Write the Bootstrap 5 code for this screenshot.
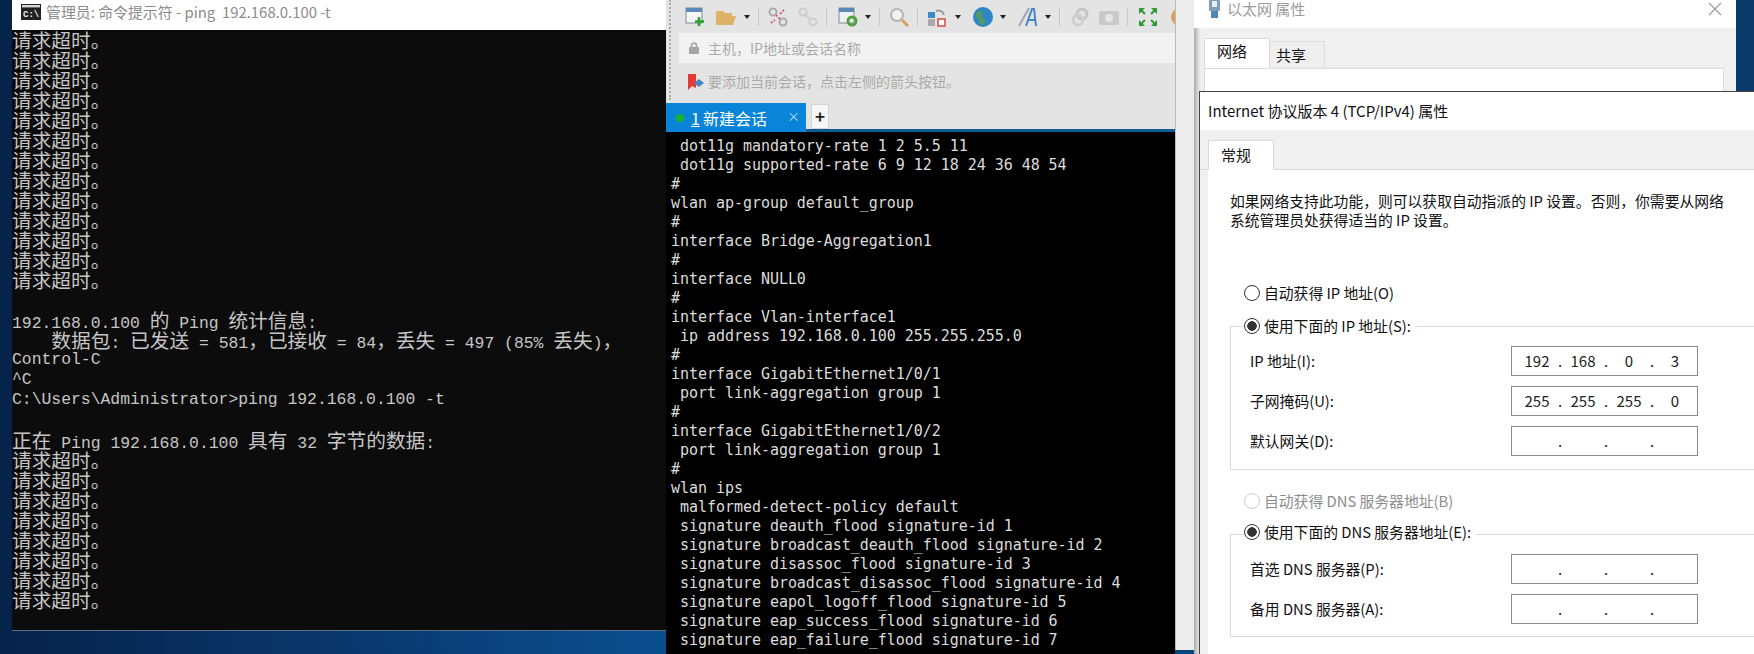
<!DOCTYPE html>
<html lang="zh-CN">
<head>
<meta charset="utf-8">
<title>Screenshot</title>
<link href="https://cdn.jsdelivr.net/npm/bootstrap@5.3.0/dist/css/bootstrap.min.css" rel="stylesheet">
<style>
html,body{height:654px;overflow:hidden}
body{position:relative;width:1754px;font-family:"Noto Sans CJK SC","Liberation Sans",sans-serif;background:linear-gradient(90deg,#06234a 0,#0a3468 300px,#0b4f90 670px,#0a3a68 1730px,#0a3a68 100%)}
.dwin{position:absolute;overflow:hidden}
/* cmd */
.w-cmd{left:12px;top:0;width:654px;height:631px;background:#0c0c0c;border-bottom:1px solid #5d7187}
.cmd-title{height:30px;background:#fff;padding:0 0 6px 9px;gap:5px;color:#8c8c8c;font-size:14.9px;line-height:18px;white-space:pre}
.cmd-body{font-family:"Liberation Mono",monospace;font-size:16.4px;color:#c6c6c6}
.cmd-ln{height:20px;line-height:20px;white-space:pre}
.zh{display:inline-block;height:20px;font-family:"Noto Sans CJK SC",sans-serif;font-size:19.7px;line-height:20px}
/* xshell */
.w-xs{left:666px;top:0;width:509px;height:654px;background:#000}
.xs-chrome{height:103px;background:#e4e4e4;position:relative}
.xs-dots{position:absolute;left:3px;top:0;bottom:3px;border-left:2px dotted #a9a9a9}
.xs-tools{height:33px;padding-left:19px}
.ti{display:block;flex:none}
.caret-d{width:0;height:0;border:3px solid transparent;border-top:4px solid #222;border-bottom:0;flex:none}
.t-sep{width:1px;height:18px;background:#c8c8c8;flex:none}
.xs-addr{height:30px;margin-left:13px;background:#f2f2f2;padding-left:9px;gap:8px;color:#aaa;font-size:14px}
.xs-book{height:37px;padding-left:22px;gap:4px;color:#aaa;font-size:14px}
.xs-tabs{height:29px;background:#e4e4e4;border-bottom:3px solid;border-image:linear-gradient(#a8d4ef 0 66%,#0d5c96 66%) 1}
.tab-on{width:140px;height:29px;margin-bottom:-3px;background:#0a84d8;color:#fff;font-size:16px;padding-left:10px;position:relative}
.tab-dot{width:8px;height:8px;border-radius:50%;background:#16b52d;margin-right:7px}
.tab-num{margin-right:3px}
.tab-x{position:absolute;left:121px;top:3px;font-size:13px;color:#b7d9f2}
.tab-add{width:18px;height:25px;margin:1px 0 0 5px;background:#f7f7f7;border:1px solid #d5d5d5;color:#222;font-size:17px;font-weight:700;line-height:22px;text-align:center}
.term{padding:5px 0 0 5px;font-family:"DejaVu Sans Mono",monospace;font-size:15px;letter-spacing:-.04px;color:#dcdcdc}
.term div{height:19px;line-height:19px;white-space:pre}
/* gutter window behind */
.w-gut{left:1175px;top:0;width:19px;height:650px;background:#ececec;border-left:1px solid #bbb}
/* ethernet */
.w-eth{left:1194px;top:0;width:542px;height:654px;background:#f0f0f0;box-shadow:inset 5px 0 4px -2px #a9a9a9}
.eth-title{height:28px;background:#fff;padding:0 14px 10px 14px;color:#9c9c9c;font-size:15px;line-height:18px;gap:6px}
.eth-tabs{padding:10px 0 0 10px;height:40px}
.wtab{font-size:15px;color:#111;display:flex;align-items:center;justify-content:center}
.wtab-on{background:#fff;width:66px;height:30px;border:1px solid #dcdcdc;border-bottom:0;padding-right:10px}
.wtab-off{background:#eee;width:55px;height:27px;margin-top:3px;border:1px solid #dcdcdc;border-left:0;border-bottom:0;padding-right:12px}
.eth-body{margin:0 12px 0 10px;background:#fff;border:1px solid #dcdcdc;height:200px}
/* ipv4 */
.w-ip{left:1199px;top:91px;width:555px;height:563px;background:#f0f0f0;border-left:1px solid #444;border-top:1px solid #444}
.ip-title{height:38px;background:#fff;padding-left:8px;color:#111;font-size:15px}
.ip-tabs{height:40px;padding:10px 0 0 8px;border-bottom:1px solid #d9d9d9}
.ip-tabs .wtab-on{width:66px;height:30px;margin-bottom:-1px;position:relative}
.ip-body{margin-left:8px;background:#fff;height:500px;padding:21px 0 0 22px;color:#111;font-size:14.8px}
.ip-note{line-height:19px;height:38px;margin-bottom:56px;white-space:nowrap}
.opt{height:16px;line-height:16px;margin-bottom:0;white-space:nowrap;position:relative;z-index:1;background:#fff;width:max-content;padding-right:4px;margin-left:14px}
.opt .form-check-input{width:16px;height:16px;margin:0 4px 0 0;border:1px solid #333;vertical-align:-2px;float:none;border-radius:50%;background-color:#fff}
.opt .form-check-input:checked{background-color:#fff;border-color:#333;background-image:radial-gradient(circle,#333 0 4.5px,#fff 5px)}
.opt .form-check-input:disabled{opacity:1;border-color:#ccc}
.opt-dis{color:#8d8d8d}
.gbox{border:1px solid #dcdcdc;border-right:0;margin-top:-8px;padding:19px 0 0 19px}
.gbox-ip{height:144px;margin-bottom:23px}
.gbox-dns{height:103px;margin-top:-6px}
.iprow{height:30px;margin-bottom:10px}
.iprow-lbl{width:261px;white-space:nowrap}
.ipbox{width:187px;height:30px;border:1px solid #8a8a8a;padding-left:5.5px;font-size:15px;color:#222;background:#fff}
.oct{width:39px;text-align:center}
.odot{width:7px;text-align:center}
</style>
</head>
<body>

<div class="dwin w-cmd">
  <div class="cmd-title d-flex align-items-center">
    <svg class="ti" width="20" height="16" viewBox="0 0 20 16"><rect width="20" height="16" fill="#222"/><rect x="1" y="1" width="18" height="2.4" fill="#d9d9d9"/><text x="2" y="13" font-family="Liberation Mono,monospace" font-size="9" font-weight="700" fill="#eee">C:\</text></svg>
    <span>管理员: 命令提示符 - ping  192.168.0.100 -t</span>
  </div>
  <div class="cmd-body">
    <div class="cmd-ln"><span class="zh">请求超时。</span></div>
    <div class="cmd-ln"><span class="zh">请求超时。</span></div>
    <div class="cmd-ln"><span class="zh">请求超时。</span></div>
    <div class="cmd-ln"><span class="zh">请求超时。</span></div>
    <div class="cmd-ln"><span class="zh">请求超时。</span></div>
    <div class="cmd-ln"><span class="zh">请求超时。</span></div>
    <div class="cmd-ln"><span class="zh">请求超时。</span></div>
    <div class="cmd-ln"><span class="zh">请求超时。</span></div>
    <div class="cmd-ln"><span class="zh">请求超时。</span></div>
    <div class="cmd-ln"><span class="zh">请求超时。</span></div>
    <div class="cmd-ln"><span class="zh">请求超时。</span></div>
    <div class="cmd-ln"><span class="zh">请求超时。</span></div>
    <div class="cmd-ln"><span class="zh">请求超时。</span></div>
    <div class="cmd-ln"> </div>
    <div class="cmd-ln">192.168.0.100 <span class="zh">的</span> Ping <span class="zh">统计信息</span>:</div>
    <div class="cmd-ln">    <span class="zh">数据包</span>: <span class="zh">已发送</span> = 581<span class="zh">&#xFF0C;已接收</span> = 84<span class="zh">&#xFF0C;丢失</span> = 497 (85% <span class="zh">丢失</span>)<span class="zh">&#xFF0C;</span></div>
    <div class="cmd-ln">Control-C</div>
    <div class="cmd-ln">^C</div>
    <div class="cmd-ln">C:\Users\Administrator&gt;ping 192.168.0.100 -t</div>
    <div class="cmd-ln"> </div>
    <div class="cmd-ln"><span class="zh">正在</span> Ping 192.168.0.100 <span class="zh">具有</span> 32 <span class="zh">字节的数据</span>:</div>
    <div class="cmd-ln"><span class="zh">请求超时。</span></div>
    <div class="cmd-ln"><span class="zh">请求超时。</span></div>
    <div class="cmd-ln"><span class="zh">请求超时。</span></div>
    <div class="cmd-ln"><span class="zh">请求超时。</span></div>
    <div class="cmd-ln"><span class="zh">请求超时。</span></div>
    <div class="cmd-ln"><span class="zh">请求超时。</span></div>
    <div class="cmd-ln"><span class="zh">请求超时。</span></div>
    <div class="cmd-ln"><span class="zh">请求超时。</span></div>
  </div>
</div>

<div class="dwin w-xs">
  <div class="xs-chrome">
    <div class="xs-dots"></div>
    <div class="xs-tools d-flex align-items-center">
      <svg class="ti" width="20" height="20" viewBox="0 0 20 20"><rect x="1" y="1" width="16" height="15" fill="#f4f6f8" stroke="#7c8a99"/><rect x="1" y="1" width="16" height="4" fill="#5d88b5"/><path d="M14 10v9M10 14.500h9" stroke="#2f9e2f" stroke-width="2.500"/></svg>
      <svg class="ti" style="margin-left:11px" width="20" height="16" viewBox="0 0 20 16"><path d="M0 2h7l2 2h7v3h4l-3 9H0z" fill="#dfb268"/></svg>
      <span class="caret-d" style="margin-left:8px"></span>
      <span class="t-sep" style="margin-left:8px"></span>
      <svg class="ti" style="margin-left:9px" width="20" height="20" viewBox="0 0 20 20"><circle cx="5" cy="5" r="3.500" fill="none" stroke="#aaa" stroke-width="2"/><circle cx="15" cy="15" r="3.500" fill="none" stroke="#aaa" stroke-width="2"/><path d="M3 16l4-3M16 3l-4 4M8 8l4 4" stroke="#e0576a" stroke-width="2" stroke-dasharray="2 1.500"/></svg>
      <svg class="ti" style="margin-left:10px" width="20" height="20" viewBox="0 0 20 20"><circle cx="5" cy="5" r="3.500" fill="none" stroke="#ccc" stroke-width="2"/><circle cx="15" cy="15" r="3.500" fill="none" stroke="#ccc" stroke-width="2"/><path d="M8 8l4 4" stroke="#ccc" stroke-width="2"/></svg>
      <span class="t-sep" style="margin-left:8px"></span>
      <svg class="ti" style="margin-left:11px" width="20" height="20" viewBox="0 0 20 20"><rect x="1" y="1" width="15" height="15" fill="#eef1f4" stroke="#7c8a99"/><rect x="1" y="1" width="15" height="4" fill="#5d88b5"/><circle cx="14" cy="14" r="4" fill="none" stroke="#4ea13c" stroke-width="3"/></svg>
      <span class="caret-d" style="margin-left:7px"></span>
      <span class="t-sep" style="margin-left:8px"></span>
      <svg class="ti" style="margin-left:9px" width="20" height="20" viewBox="0 0 20 20"><circle cx="8" cy="8" r="6" fill="#f1f1f1" stroke="#b5b5b5" stroke-width="2"/><path d="M13 13l6 6" stroke="#d9a05a" stroke-width="3"/></svg>
      <span class="t-sep" style="margin-left:8px"></span>
      <svg class="ti" style="margin-left:9px" width="20" height="20" viewBox="0 0 20 20"><rect x="1" y="5" width="7" height="6" fill="#3b86c9"/><rect x="1" y="12" width="7" height="7" fill="#a9a9a9"/><rect x="11" y="12" width="7" height="7" fill="#fff" stroke="#d8483f" stroke-width="1.500"/><path d="M9 4a6 6 0 0 1 8 4" fill="none" stroke="#999" stroke-width="2"/></svg>
      <span class="caret-d" style="margin-left:8px"></span>
      <svg class="ti" style="margin-left:12px" width="20" height="20" viewBox="0 0 20 20"><circle cx="10" cy="10" r="10" fill="#2f86c4"/><path d="M4 5c3-3 6 0 5 3s3 3 3 6-2 5-4 4-1-4-3-6-3-5-1-7z" fill="#4f9c63"/></svg>
      <span class="caret-d" style="margin-left:7px"></span>
      <svg class="ti" style="margin-left:12px" width="20" height="20" viewBox="0 0 20 20"><path d="M1 19L11 1" stroke="#9aa7b3" stroke-width="2"/><path d="M8 19L14 2h2l2 17M10 13h7" fill="none" stroke="#4586c2" stroke-width="2"/></svg>
      <span class="caret-d" style="margin-left:7px"></span>
      <span class="t-sep" style="margin-left:8px"></span>
      <svg class="ti" style="margin-left:10px" width="20" height="20" viewBox="0 0 20 20"><circle cx="12" cy="7" r="5" fill="none" stroke="#c4c4c4" stroke-width="3"/><circle cx="8" cy="13" r="5" fill="none" stroke="#cfcfcf" stroke-width="3"/></svg>
      <svg class="ti" style="margin-left:9px" width="20" height="16" viewBox="0 0 20 16"><rect x="0" y="2" width="20" height="14" rx="2" fill="#c9c9c9"/><circle cx="10" cy="9" r="4" fill="#e4e4e4"/></svg>
      <span class="t-sep" style="margin-left:8px"></span>
      <svg class="ti" style="margin-left:10px" width="20" height="20" viewBox="0 0 20 20"><path d="M1 7V1h6zM19 7V1h-6zM1 13v6h6zM19 13v6h-6z" fill="#2e9b3a"/><path d="M3 3l4 4M17 3l-4 4M3 17l4-4M17 17l-4-4" stroke="#2e9b3a" stroke-width="2"/></svg>
      <svg class="ti" style="margin-left:13px" width="6" height="20" viewBox="0 0 6 20"><circle cx="9" cy="10" r="9" fill="#d9a25f"/></svg>
    </div>
    <div class="xs-addr d-flex align-items-center">
      <svg class="ti" width="12" height="12" viewBox="0 0 12 12"><rect x="1" y="5" width="10" height="7" rx="1" fill="#a5a5a5"/><path d="M3.500 5V3.500a2.500 2.500 0 0 1 5 0V5" fill="none" stroke="#a5a5a5" stroke-width="1.500"/></svg>
      <span>主机&#xFF0C;IP地址或会话名称</span>
    </div>
    <div class="xs-book d-flex align-items-center">
      <svg class="ti" width="16" height="16" viewBox="0 0 16 16"><path d="M0 0h8v14l-4-2-4 4z" fill="#e53935"/><path d="M6 9l5-4 5 4-5 4z" fill="#4a86c5"/></svg>
      <span>要添加当前会话&#xFF0C;点击左侧的箭头按钮。</span>
    </div>
  </div>
  <div class="xs-tabs d-flex align-items-start">
    <div class="tab-on d-flex align-items-center"><span class="tab-dot"></span><u class="tab-num">1</u><span>新建会话</span><span class="tab-x">×</span></div>
    <div class="tab-add">+</div>
  </div>
  <div class="term">
    <div> dot11g mandatory-rate 1 2 5.5 11</div>
    <div> dot11g supported-rate 6 9 12 18 24 36 48 54</div>
    <div>#</div>
    <div>wlan ap-group default_group</div>
    <div>#</div>
    <div>interface Bridge-Aggregation1</div>
    <div>#</div>
    <div>interface NULL0</div>
    <div>#</div>
    <div>interface Vlan-interface1</div>
    <div> ip address 192.168.0.100 255.255.255.0</div>
    <div>#</div>
    <div>interface GigabitEthernet1/0/1</div>
    <div> port link-aggregation group 1</div>
    <div>#</div>
    <div>interface GigabitEthernet1/0/2</div>
    <div> port link-aggregation group 1</div>
    <div>#</div>
    <div>wlan ips</div>
    <div> malformed-detect-policy default</div>
    <div> signature deauth_flood signature-id 1</div>
    <div> signature broadcast_deauth_flood signature-id 2</div>
    <div> signature disassoc_flood signature-id 3</div>
    <div> signature broadcast_disassoc_flood signature-id 4</div>
    <div> signature eapol_logoff_flood signature-id 5</div>
    <div> signature eap_success_flood signature-id 6</div>
    <div> signature eap_failure_flood signature-id 7</div>
  </div>
</div>

<div class="dwin w-gut"></div>

<div class="dwin w-eth">
  <div class="eth-title d-flex align-items-center">
    <svg class="ti" width="13" height="18" viewBox="0 0 13 18"><rect x="1" y="0" width="11" height="11" rx="1" fill="#7f9db8"/><rect x="4" y="1" width="5" height="6" fill="#e5edf4"/><rect x="3" y="11" width="7" height="7" fill="#4e86b5"/></svg>
    <span class="flex-grow-1">以太网 属性</span>
    <svg class="ti" width="14" height="14" viewBox="0 0 14 14"><path d="M1 1l12 12M13 1L1 13" stroke="#9a9a9a" stroke-width="1.100"/></svg>
  </div>
  <div class="eth-tabs d-flex align-items-start">
    <div class="wtab wtab-on pb-1">网络</div>
    <div class="wtab wtab-off">共享</div>
  </div>
  <div class="eth-body"></div>
</div>

<div class="dwin w-ip">
  <div class="ip-title d-flex align-items-center"><span>Internet 协议版本 4 (TCP/IPv4) 属性</span></div>
  <div class="ip-tabs d-flex align-items-start"><div class="wtab wtab-on">常规</div></div>
  <div class="ip-body">
    <div class="ip-note">如果网络支持此功能&#xFF0C;则可以获取自动指派的 IP 设置。否则&#xFF0C;你需要从网络<br>系统管理员处获得适当的 IP 设置。</div>
    <div class="opt" style="margin-bottom:17px"><input class="form-check-input" type="radio" name="ipmode" id="r1"><label for="r1">自动获得 IP 地址(O)</label></div>
    <div class="opt"><input class="form-check-input" type="radio" name="ipmode" id="r2" checked><label for="r2">使用下面的 IP 地址(S):</label></div>
    <div class="gbox gbox-ip">
      <div class="iprow d-flex align-items-center"><span class="iprow-lbl">IP 地址(I):</span><div class="ipbox d-flex align-items-center"><span class="oct">192</span><span class="odot">.</span><span class="oct">168</span><span class="odot">.</span><span class="oct">0</span><span class="odot">.</span><span class="oct">3</span></div></div>
      <div class="iprow d-flex align-items-center"><span class="iprow-lbl">子网掩码(U):</span><div class="ipbox d-flex align-items-center"><span class="oct">255</span><span class="odot">.</span><span class="oct">255</span><span class="odot">.</span><span class="oct">255</span><span class="odot">.</span><span class="oct">0</span></div></div>
      <div class="iprow d-flex align-items-center"><span class="iprow-lbl">默认网关(D):</span><div class="ipbox d-flex align-items-center"><span class="oct"></span><span class="odot">.</span><span class="oct"></span><span class="odot">.</span><span class="oct"></span><span class="odot">.</span><span class="oct"></span></div></div>
    </div>
    <div class="opt opt-dis" style="margin-bottom:15px"><input class="form-check-input" type="radio" name="dnsmode" id="r3" disabled><label for="r3">自动获得 DNS 服务器地址(B)</label></div>
    <div class="opt"><input class="form-check-input" type="radio" name="dnsmode" id="r4" checked><label for="r4">使用下面的 DNS 服务器地址(E):</label></div>
    <div class="gbox gbox-dns">
      <div class="iprow d-flex align-items-center"><span class="iprow-lbl">首选 DNS 服务器(P):</span><div class="ipbox d-flex align-items-center"><span class="oct"></span><span class="odot">.</span><span class="oct"></span><span class="odot">.</span><span class="oct"></span><span class="odot">.</span><span class="oct"></span></div></div>
      <div class="iprow d-flex align-items-center"><span class="iprow-lbl">备用 DNS 服务器(A):</span><div class="ipbox d-flex align-items-center"><span class="oct"></span><span class="odot">.</span><span class="oct"></span><span class="odot">.</span><span class="oct"></span><span class="odot">.</span><span class="oct"></span></div></div>
    </div>
  </div>
</div>

<script src="https://cdn.jsdelivr.net/npm/bootstrap@5.3.0/dist/js/bootstrap.bundle.min.js"></script>
</body>
</html>
